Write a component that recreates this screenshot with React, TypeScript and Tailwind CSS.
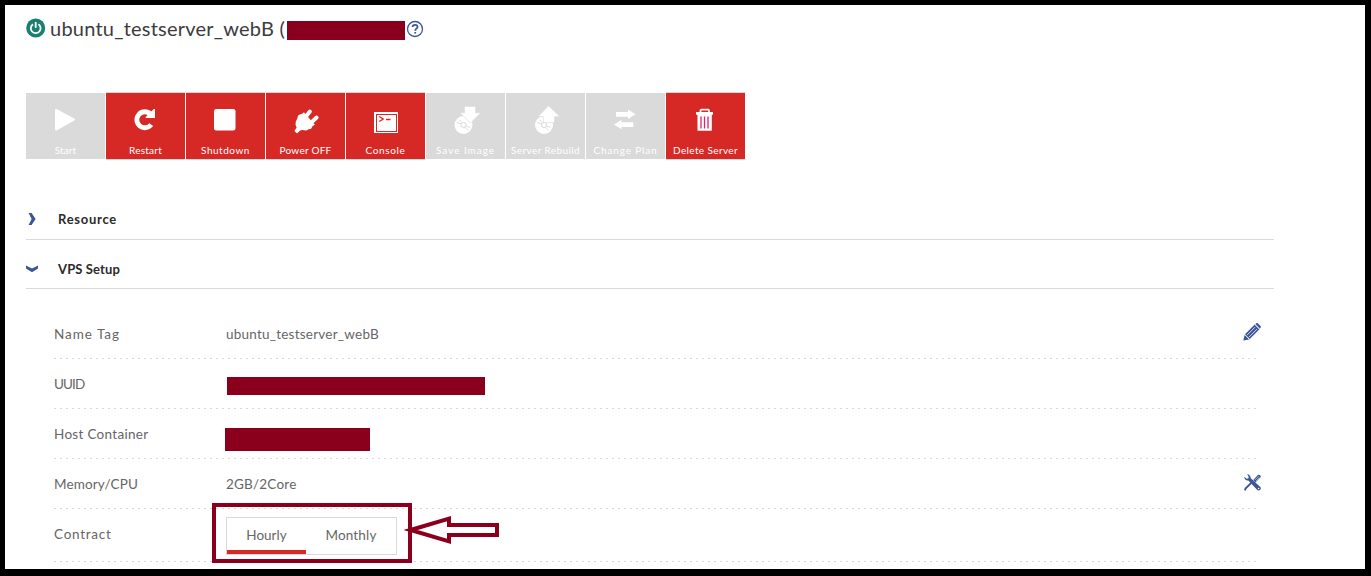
import clsx from 'clsx';
import type { ReactNode } from 'react';

const icons: Record<string, ReactNode> = {
  start: <path d="M4 4.2C4 3 5 2.6 6 3.2L23.2 12.6c1 .6 1 1.4 0 2L6 24.2c-1 .6-2 .2-2-1z" />,
  restart: (
    <>
      <path
        d="M19.6 8.2A8 8 0 1 0 20.2 18.6"
        fill="none"
        stroke="currentColor"
        strokeWidth="4.8"
      />
      <path d="M24 3v9h-9c-.6-.1-.7-.6-.3-1L22.8 3z" />
    </>
  ),
  shutdown: <rect x="3" y="3" width="21.5" height="21.5" rx="2.2" />,
  power: (
    <>
      <path d="M9.3 8.3l1.9-.6 1.7-1.4 11 12.5-2.2 1.3-1.6 2.7-2.4.5-2.5 1.2-3.6-.4-2.5.4L6 27.4 3.4 25l2.2-3.6-1.1-2.6.3-3.4 1.5-3 .8-3z" />
      <path
        d="M14.3 11.2l4.6-5.6M20.2 16.6l5.4-5.1"
        fill="none"
        stroke="currentColor"
        strokeWidth="4"
        strokeLinecap="round"
      />
    </>
  ),
  console: (
    <>
      <rect x="3" y="6" width="24" height="21" />
      <rect x="5.5" y="8.5" width="20" height="17" fill="none" stroke="#d62925" />
      <path d="M8.2 10.5l4 2.5-4 2.5M15 13.5h4.5" fill="none" stroke="#d62925" strokeWidth="1.4" />
    </>
  ),
  save: (
    <>
      <circle cx="12.5" cy="19" r="9" />
      <circle cx="12.5" cy="19" r="2.6" fill="none" stroke="#dadada" strokeWidth="1" />
      <path
        d="M6 16.5l4 1.5M8 13.6l2.8 3M19 21.5l-4-1.5M17 24.4l-2.8-3"
        fill="none"
        stroke="#dadada"
        strokeWidth=".9"
      />
      <path d="M13.5.5h11v6.2h5.3L19.5 17 9 6.7h4.5z" stroke="#dadada" strokeWidth=".6" />
    </>
  ),
  rebuild: (
    <>
      <circle cx="13" cy="19" r="9" />
      <circle cx="13" cy="19" r="2.6" fill="none" stroke="#dadada" strokeWidth="1" />
      <path
        d="M6.5 16.5l4 1.5M8.5 13.6l2.8 3M19.5 21.5l-4-1.5M17.5 24.4l-2.8-3"
        fill="none"
        stroke="#dadada"
        strokeWidth=".9"
      />
      <path d="M12.5 16.6h11v-6h5.3L17.5-.2 7.2 10.6h5.3z" stroke="#dadada" strokeWidth=".6" />
    </>
  ),
  change: (
    <path d="M5 5.9h12V3.6l7.5 4.7L17 13v-2.3H5zM22.3 16.2H10.5v-2.3L3 18.6l7.5 4.7V21h11.8z" />
  ),
  delete: (
    <>
      <path d="M9.5 6V4.6c0-.6.4-1 1-1H17c.6 0 1 .4 1 1V6" fill="none" stroke="currentColor" strokeWidth="1.8" />
      <path d="M5 6h17v2.7h-1.2v16.1H6.5V8.7H5z" />
      <path d="M10 10.5v12M13.5 10.5v12M17 10.5v12" stroke="#e02368" strokeWidth="1.3" />
    </>
  ),
};

const actions = [
  { label: 'Start', icon: 'start', enabled: false, tracking: 'tracking-[0.1px]' },
  { label: 'Restart', icon: 'restart', enabled: true, tracking: 'tracking-[0.22px]' },
  { label: 'Shutdown', icon: 'shutdown', enabled: true, tracking: 'tracking-[0.53px]' },
  { label: 'Power OFF', icon: 'power', enabled: true, tracking: 'tracking-[0.25px]' },
  { label: 'Console', icon: 'console', enabled: true, tracking: 'tracking-[0.63px]' },
  { label: 'Save Image', icon: 'save', enabled: false, tracking: 'tracking-[0.95px]' },
  { label: 'Server Rebuild', icon: 'rebuild', enabled: false, tracking: 'tracking-[0.4px]' },
  { label: 'Change Plan', icon: 'change', enabled: false, tracking: 'tracking-[0.85px]' },
  { label: 'Delete Server', icon: 'delete', enabled: true, tracking: 'tracking-[0.38px]' },
];

function PencilIcon() {
  return (
    <svg width="18" height="18" viewBox="0 0 18 18" fill="#3b5598" className="mb-[3px]">
      <path d="M.3 17.6L1.6 12l4.5 4.5z" />
      <path d="M2 11.2L12 1.3l4.7 4.7-9.9 9.9z" />
      <path d="M12.5.9l.6-.5c.5-.5 1.4-.5 1.9 0l2.5 2.5c.5.5.5 1.4 0 1.9l-.6.6z" />
      <path d="M4 12.2l8-8M6 14.1l8-8" stroke="#fff" strokeWidth=".8" />
      <path d="M11.6 1.5l4.9 4.9" stroke="#fff" strokeWidth=".7" />
    </svg>
  );
}

function ToolsIcon() {
  return (
    <svg width="17" height="17" viewBox="0 0 17 17" fill="#3b5598" className="mb-[3px]">
      <path d="M.9 16.4l.6-1.8 7-7" fill="none" stroke="#3b5598" strokeWidth="1.8" />
      <path d="M9.2 6.1l4.7-5c1.2-1.3 3.7.9 2.5 2.3l-5 5z" />
      <path d="M10.8 6.1l3.9-3.9M11.9 7.2l3.6-3.7" stroke="#fff" strokeWidth=".5" />
      <path d="M3.1.2C4.8 0 6.9 1.6 6.6 4l9.7 8.9c1.8 1.9-1 4.7-3 3.1L4.3 6.5C2 7 .1 4.9.3 2.8l2.3 1.9 1.7-.3.4-1.7z" />
      <circle cx="14.6" cy="14.5" r=".8" fill="#fff" />
    </svg>
  );
}

function Toolbar() {
  return (
    <div className="mt-[39px] flex">
      {actions.map((action) => (
        <button
          key={action.label}
          disabled={!action.enabled}
          className={clsx(
            'flex h-[68px] w-20 flex-col items-center border-y border-r border-r-white pt-[13px] text-white',
            action.enabled ? 'border-y-[#d6d6d6] bg-[#d62925]' : 'border-y-white bg-[#dadada]',
          )}
        >
          <svg
            width="30"
            height="30"
            viewBox="0 0 30 30"
            fill="currentColor"
            className="ml-[1px] shrink-0 overflow-visible"
          >
            {icons[action.icon]}
          </svg>
          <span className={clsx('mt-1.5 text-[10px] leading-4 whitespace-nowrap', action.tracking)}>
            {action.label}
          </span>
        </button>
      ))}
    </div>
  );
}

function Row({
  label,
  tracking,
  last,
  action,
  children,
}: {
  label: string;
  tracking: string;
  last?: boolean;
  action?: ReactNode;
  children: ReactNode;
}) {
  return (
    <div className={clsx('flex w-[1207px] flex-col', last ? 'h-[53px]' : 'h-[50px]')}>
      <div className="flex h-[49px] items-center">
        <span className={clsx('w-[172px] pt-0.5', tracking)}>{label}</span>
        <div className="flex-1">{children}</div>
        {action}
      </div>
      <div
        className={clsx(
          'h-px w-[1203px] bg-[repeating-linear-gradient(90deg,#d8d8d8_0_2px,transparent_2px_6px)]',
          last && 'mt-[3px]',
        )}
      />
    </div>
  );
}

export default function App() {
  return (
    <div className="relative h-[576px] w-[1371px] overflow-hidden border-t-5 border-r-6 border-b-7 border-l-5 border-black bg-white pl-[21px] font-['Lato',sans-serif] text-[13.5px] text-[#666]">
      <header className="flex h-12 items-center">
        <svg width="20" height="20" viewBox="0 0 20 20" fill="none" className="mb-0.5">
          <circle cx="9.7" cy="10" r="9.5" fill="#1b7f6f" />
          <path d="M7 6.2a4.9 4.9 0 1 0 5.4 0" stroke="#fff" strokeWidth="1.8" />
          <path d="M9.7 4v6" stroke="#fff" strokeWidth="1.8" />
        </svg>
        <h1 className="mb-0.5 ml-1 w-[237px] text-[20px] tracking-[0.23px] whitespace-nowrap text-[#3c3c3c]">
          ubuntu_testserver_webB (
        </h1>
        <span className="mt-[3px] h-[19px] w-[118px] bg-[#8a001c]" />
        <svg width="18" height="18" viewBox="0 0 18 18" fill="none" className="ml-px" stroke="#3b5598">
          <circle cx="9" cy="9" r="7.5" strokeWidth="1.3" />
          <path d="M6.6 7.1c0-3 4.9-3 4.9-.2 0 1.7-2.3 1.8-2.3 3.8M9.2 11.9v1.7" strokeWidth="1.8" />
        </svg>
      </header>

      <Toolbar />

      <h2 className="mt-[30px] flex h-[50px] w-[1248px] items-center border-b border-[#d9d9d9] pt-[9px] text-[13px] font-bold text-[#2b2b2b]">
        <svg width="12" height="12" viewBox="0 0 12 12" className="mr-5" fill="#3b5598">
          <path d="M2.6 0h3l4 6-4 6h-3l3-6z" />
        </svg>
        <span className="pt-0.5 tracking-[0.73px]">Resource</span>
      </h2>
      <h2 className="flex h-[49px] w-[1248px] items-center border-b border-[#d9d9d9] pt-[9px] text-[13px] font-bold text-[#2b2b2b]">
        <svg width="12" height="12" viewBox="0 0 12 12" className="mr-5" fill="#3b5598">
          <path d="M0 2.6l6 3 6-3v3L6 9.2 0 5.6z" />
        </svg>
        <span className="pt-0.5 tracking-[0.12px]">VPS Setup</span>
      </h2>

      <div className="mt-5 ml-7">
        <Row label="Name Tag" tracking="tracking-[0.97px]" action={<PencilIcon />}>
          <div className="pt-0.5 tracking-[0.23px]">ubuntu_testserver_webB</div>
        </Row>
        <Row label="UUID" tracking="tracking-[-0.9px]">
          <div className="mt-[5px] ml-px h-[18px] w-[258px] bg-[#8a001c]" />
        </Row>
        <Row label="Host Container" tracking="tracking-[0.3px]">
          <div className="mt-3 -ml-px h-[23px] w-[145px] bg-[#8a001c]" />
        </Row>
        <Row label="Memory/CPU" tracking="tracking-[0.14px]" action={<ToolsIcon />}>
          <div className="pt-0.5 tracking-[0.2px]">2GB/2Core</div>
        </Row>
        <Row label="Contract" tracking="tracking-[0.75px]" last>
          <div className="mt-[5px] flex h-[38px] w-[171px] border border-[#d9d9d9]">
            <div className="flex w-[79px] items-center justify-center border-b-4 border-[#d62925] pt-[3px]">
              Hourly
            </div>
            <div className="flex flex-1 items-center justify-center pb-px tracking-[0.15px]">Monthly</div>
          </div>
        </Row>
      </div>

      {/* callout over the contract switch */}
      <div className="absolute top-[498px] left-[207px] h-[60px] w-[200px] border-4 border-[#8a001c]" />
      <svg
        width="100"
        height="32"
        viewBox="400 514 100 32"
        fill="none"
        className="absolute top-[509px] left-[395px]"
      >
        <path
          d="M410.5 530L449 518.7V525H497V535H449V541.3Z"
          fill="#fff"
          stroke="#8a001c"
          strokeWidth="4"
          strokeMiterlimit="10"
        />
      </svg>
    </div>
  );
}
